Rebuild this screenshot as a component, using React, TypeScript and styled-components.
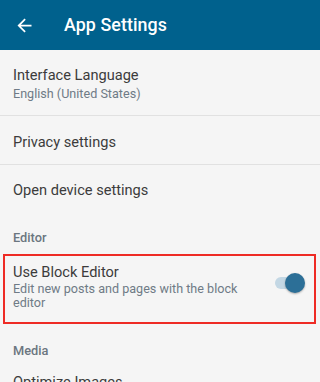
import React from "react";
import styled, { createGlobalStyle } from "styled-components";

const Global = createGlobalStyle`
  html, body { margin: 0; padding: 0; background: #f5f5f5; }
  body { font-family: Roboto, "Noto Sans", "Liberation Sans", sans-serif; -webkit-font-smoothing: antialiased; }
  * { box-sizing: border-box; }
`;

const Page = styled.div`
  width: 320px;
  height: 382px;
  overflow: hidden;
  background: #f5f5f5;
  display: flex;
  flex-direction: column;
`;

const AppBar = styled.header`
  height: 50px;
  flex: none;
  background: #00618d;
  display: flex;
  align-items: center;
  padding-left: 14px;
  color: #ffffff;
`;

const BackButton = styled.span`
  width: 21px;
  height: 21px;
  display: flex;
  margin-right: 29px;
  margin-top: 1px;
`;

const Title = styled.h1`
  margin: 0;
  font-size: 17.8px;
  font-weight: 500;
  line-height: 50px;
  letter-spacing: 0.1px;
`;

const Row = styled.div<{ $divider?: boolean; $pt: number; $pb: number }>`
  flex: none;
  padding: ${(p) => p.$pt}px 16px ${(p) => p.$pb}px 13px;
  border-bottom: ${(p) => (p.$divider ? "1px solid #e1e1e1" : "none")};
  display: flex;
  align-items: flex-start;
  gap: 12px;
`;

const Highlight = styled.div`
  flex: none;
  margin: 0 4px 0 3px;
  border: 2px solid #ee2b25;
  padding: 6px 9px 12px 8px;
  display: flex;
  align-items: flex-start;
  justify-content: space-between;
  gap: 12px;
`;

const Texts = styled.div`
  display: flex;
  flex-direction: column;
  flex: 1;
  min-width: 0;
`;

const Primary = styled.div`
  font-size: 14.6px;
  line-height: 20px;
  color: #3c3c3c;
`;

const Secondary = styled.div<{ $lh?: number }>`
  font-size: 12.6px;
  line-height: ${(p) => p.$lh ?? 18}px;
  color: #6f7b86;
`;

const Category = styled.div<{ $pt: number; $pb: number }>`
  flex: none;
  padding: ${(p) => p.$pt}px 16px ${(p) => p.$pb}px 13px;
  font-size: 12.8px;
  font-weight: 500;
  line-height: 18px;
  color: #6b7680;
`;

const Switch = styled.span`
  position: relative;
  width: 31px;
  height: 20px;
  flex: none;
  margin-top: 11px;
`;

const Track = styled.span`
  position: absolute;
  left: 1px;
  top: 4px;
  width: 25px;
  height: 12px;
  border-radius: 6px;
  background: #c3d7e4;
`;

const Knob = styled.span`
  position: absolute;
  left: 11px;
  top: 0;
  width: 20px;
  height: 20px;
  border-radius: 50%;
  background: #2c6f97;
  box-shadow: 0 1px 2px rgba(0, 0, 0, 0.3);
`;

export default function App() {
  return (
    <Page>
      <Global />
      <AppBar>
        <BackButton>
          <svg width="21" height="21" viewBox="0 0 24 24" fill="#ffffff">
            <path d="M20 11H7.83l5.59-5.59L12 4l-8 8 8 8 1.41-1.41L7.83 13H20v-2z" />
          </svg>
        </BackButton>
        <Title>App Settings</Title>
      </AppBar>

      <Row $divider $pt={15} $pb={12}>
        <Texts>
          <Primary>Interface Language</Primary>
          <Secondary>English (United States)</Secondary>
        </Texts>
      </Row>

      <Row $divider $pt={16} $pb={12}>
        <Texts>
          <Primary>Privacy settings</Primary>
        </Texts>
      </Row>

      <Row $pt={15} $pb={13}>
        <Texts>
          <Primary>Open device settings</Primary>
        </Texts>
      </Row>

      <Category $pt={16} $pb={7}>Editor</Category>

      <Highlight>
        <Texts>
          <Primary>Use Block Editor</Primary>
          <Secondary $lh={14}>Edit new posts and pages with the block editor</Secondary>
        </Texts>
        <Switch>
          <Track />
          <Knob />
        </Switch>
      </Highlight>

      <Category $pt={18} $pb={8}>Media</Category>

      <Row $pt={4} $pb={12}>
        <Texts>
          <Primary>Optimize Images</Primary>
        </Texts>
      </Row>
    </Page>
  );
}
